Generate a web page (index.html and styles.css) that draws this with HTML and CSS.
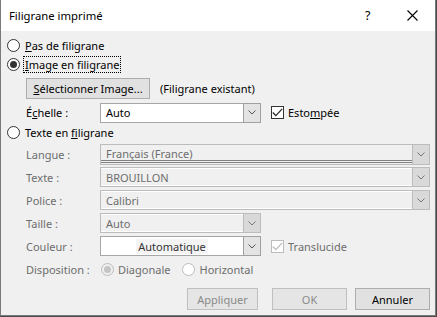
FILE: index.html
```html
<!DOCTYPE html>
<html lang="fr">
<head>
<meta charset="utf-8">
<link rel="stylesheet" href="styles.css">
</head>
<body>
<div class="dialog">
  <div class="titlebar">
    <span class="title">Filigrane imprimé</span>
    <span class="help">?</span>
    <svg class="close" width="11" height="11" viewBox="0 0 11 11"><path d="M0.5 0.5 L10.5 10.5 M10.5 0.5 L0.5 10.5" stroke="#000" stroke-width="1.1" fill="none"/></svg>
  </div>
  <div class="body">
    <div class="radio-row r1"><span class="radio"></span><span class="lbl"><u>P</u>as de filigrane</span></div>
    <div class="radio-row r2"><span class="radio on"></span><span class="lbl focus"><u>I</u>mage en filigrane</span></div>
    <div class="ind-row btnrow">
      <span class="btn sel"><u>S</u>électionner Image...</span>
      <span class="existing">(Filigrane existant)</span>
    </div>
    <div class="ind-row scalerow">
      <span class="flabel">É<u>c</u>helle :</span>
      <div class="combo en w161"><span class="field">Auto</span><span class="arrow"><svg width="8" height="5" viewBox="0 0 8 5"><path d="M0.5 0.5 L4 4 L7.5 0.5" stroke="#555" fill="none"/></svg></span></div>
      <span class="check on"><svg width="11" height="9" viewBox="0 0 11 9"><path d="M0.8 4.5 L3.8 7.6 L10.2 0.8" stroke="#222" stroke-width="1.2" fill="none"/></svg></span>
      <span class="chklbl">Esto<u>m</u>pée</span>
    </div>
    <div class="radio-row r3"><span class="radio"></span><span class="lbl">Texte en <u>f</u>iligrane</span></div>
    <div class="form">
      <div class="frow"><span class="flabel dis">Langue :</span>
        <div class="combo dis wide lang"><span class="field">Français (France)</span><span class="arrow"><svg width="8" height="5" viewBox="0 0 8 5"><path d="M0.5 0.5 L4 4 L7.5 0.5" stroke="#777" fill="none"/></svg></span></div></div>
      <div class="frow"><span class="flabel dis">Texte :</span>
        <div class="combo dis wide"><span class="field">BROUILLON</span><span class="arrow"><svg width="8" height="5" viewBox="0 0 8 5"><path d="M0.5 0.5 L4 4 L7.5 0.5" stroke="#777" fill="none"/></svg></span></div></div>
      <div class="frow"><span class="flabel dis">Police :</span>
        <div class="combo dis wide"><span class="field">Calibri</span><span class="arrow"><svg width="8" height="5" viewBox="0 0 8 5"><path d="M0.5 0.5 L4 4 L7.5 0.5" stroke="#777" fill="none"/></svg></span></div></div>
      <div class="frow"><span class="flabel dis">Taille :</span>
        <div class="combo dis w161"><span class="field">Auto</span><span class="arrow"><svg width="8" height="5" viewBox="0 0 8 5"><path d="M0.5 0.5 L4 4 L7.5 0.5" stroke="#777" fill="none"/></svg></span></div></div>
      <div class="frow"><span class="flabel dis">Couleur :</span>
        <div class="combo en w161 color"><span class="field"><span class="auto">Automatique</span></span><span class="arrow"><svg width="8" height="5" viewBox="0 0 8 5"><path d="M0.5 0.5 L4 4 L7.5 0.5" stroke="#555" fill="none"/></svg></span></div>
        <span class="check dis"><svg width="11" height="9" viewBox="0 0 11 9"><path d="M0.8 4.5 L3.8 7.6 L10.2 0.8" stroke="#bbb" stroke-width="1.2" fill="none"/></svg></span>
        <span class="chklbl dis">Translucide</span></div>
      <div class="frow disp"><span class="flabel dis">Disposition :</span>
        <span class="radio dis on"></span><span class="rlbl dis">Diagonale</span>
        <span class="radio dis hz"></span><span class="rlbl dis">Horizontal</span></div>
    </div>
    <div class="actions">
      <span class="btn dis apply">Appliquer</span>
      <span class="btn dis ok">OK</span>
      <span class="btn annuler">Annuler</span>
    </div>
  </div>
</div>
</body>
</html>
```
FILE: styles.css
```css
* { box-sizing: border-box; }
html, body { margin: 0; padding: 0; }
body {
  width: 437px; height: 317px; overflow: hidden;
  background: #4a4a4a;
  font-family: "Segoe UI", "Noto Sans", sans-serif;
  font-size: 11px;
  color: #000;
}
u { text-decoration: underline; text-underline-offset: 1px; }
.dialog {
  width: 436px; height: 316px;
  border: 1px solid #7a7a7a;
  border-top: none;
  background: #f0f0f0;
  display: flex; flex-direction: column;
}
.titlebar {
  height: 31px; background: #fff;
  display: flex; align-items: center;
  padding-left: 8px;
}
.title { flex: 1; font-size: 11.3px; }
.help { width: 20px; margin-right: 22px; font-size: 12.5px; }
.close { margin-right: 17px; }
.body { position: relative; flex: 1; padding: 5px 0 0 0; }
.radio-row { height: 19px; display: flex; align-items: center; padding-left: 6px; }
.radio {
  width: 13px; height: 13px; border-radius: 50%;
  border: 1px solid #333; background: #fff;
  flex: none; position: relative;
}
.radio.on::after {
  content: ""; position: absolute; left: 2px; top: 2px;
  width: 7px; height: 7px; border-radius: 50%; background: #333;
}
.radio.dis { border-color: #bcbcbc; background: #fff; }
.radio.dis.on { background: #f0f0f0; }
.radio.dis.on::after { background: #c4c4c4; }
.lbl { margin-left: 4px; line-height: 15px; padding: 0 1px; }
.lbl.focus { outline: 1px dotted #000; outline-offset: 0; }
.ind-row { display: flex; align-items: center; padding-left: 25px; }
.btnrow { margin-top: 4px; height: 21px; }
.btn {
  display: inline-flex; align-items: center; justify-content: center;
  background: #e1e1e1; border: 1px solid #adadad;
}
.btn.sel { width: 124px; height: 21px; }
.existing { margin-left: 10px; }
.scalerow { margin-top: 3px; height: 21px; }
.flabel { width: 74px; flex: none; }
.flabel.dis, .dis { color: #6d6d6d; }
.combo { display: flex; height: 20px; flex: none; }
.combo .field {
  flex: 1; display: flex; align-items: center; padding-left: 5px;
  border: 1px solid #a0a0a0; border-right: none; background: #fff;
}
.combo .arrow {
  width: 18px; display: flex; align-items: center; justify-content: center;
  background: #e3e3e3; border: 1px solid #a0a0a0;
}
.combo.en .field { border-color: #a6a6a6; }
.w161 { width: 161px; }
.wide { width: 330px; }
.combo.dis .field {
  background: #f0f0f0; border-color: #bcbcbc;
  box-shadow: inset 0 1px 0 #fff, inset 0 -1px 0 #fff;
  color: #6d6d6d;
}
.combo.dis .arrow { background: #d9d9d9; border: 1px solid #bcbcbc; }
.combo.lang { height: 21px; }
.combo.lang .field {
  align-items: flex-start; padding-top: 1px;
  box-shadow: inset 0 -1px 0 #f0f0f0, inset 0 -2px 0 #808080, inset 0 -3px 0 #f0f0f0, inset 0 -4px 0 #808080;
}
.check {
  margin-left: 10px; width: 13px; height: 13px; border: 1px solid #333; background: #fff;
  display: flex; align-items: center; justify-content: center; flex: none;
}
.check.dis { border-color: #bcbcbc; }
.chklbl { margin-left: 4px; }
.r3 { margin-top: 0; }
.form { padding-left: 25px; margin-top: 2px; display: flex; flex-direction: column; gap: 3px; }
.frow { display: flex; align-items: center; height: 20px; }
.frow:first-child { height: 21px; margin-bottom: -1px; }
.color .field { justify-content: center; padding-left: 0; }
.color .auto { background: #f4f4f4; padding: 0 2px; color: #333; }
.disp .radio { margin-left: 1px; }
.rlbl { margin-left: 4px; }
.disp .hz { margin-left: 12px; }
.actions { display: flex; padding-left: 186px; margin-top: 9px; }
.actions .btn { height: 22px; width: 75px; }
.actions .apply { width: 71px; }
.actions .ok { margin-left: 14px; }
.actions .annuler { margin-left: 8px; }
.btn.dis { color: #8a8a8a; border-color: #bfbfbf; background: #e5e5e5; }
```
